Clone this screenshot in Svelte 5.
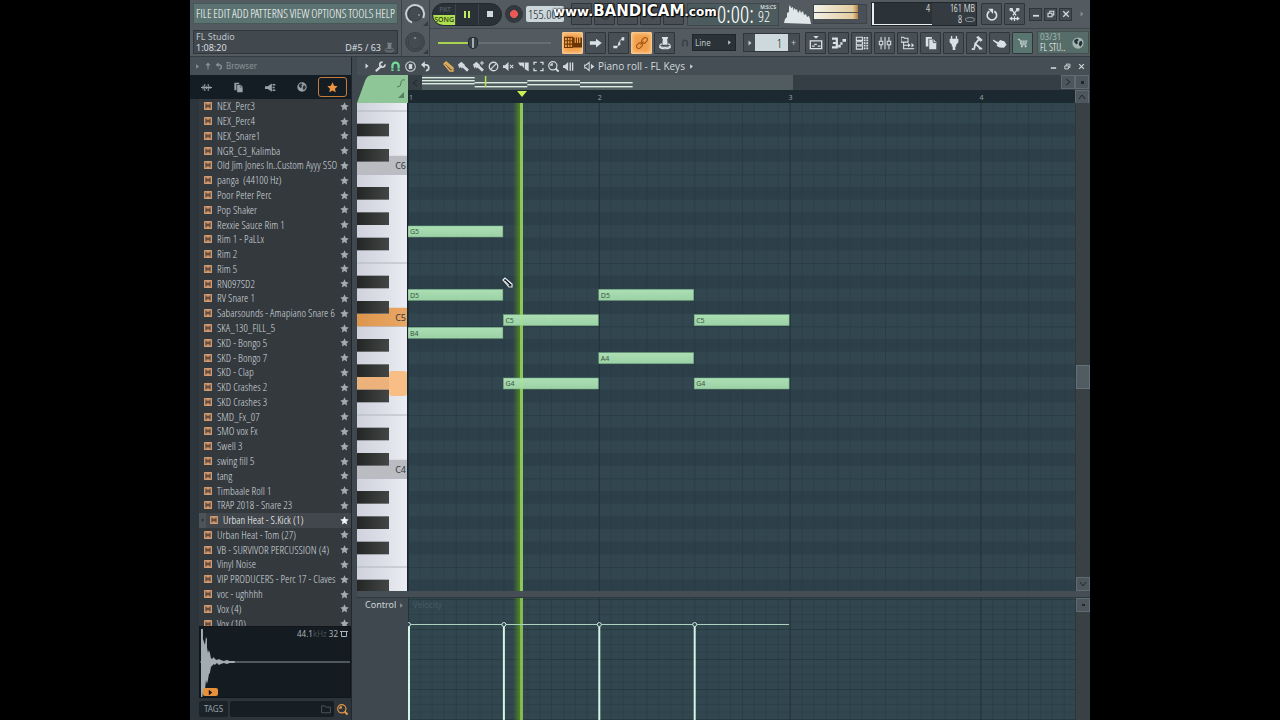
<script>
  const menus = ['FILE', 'EDIT', 'ADD', 'PATTERNS', 'VIEW', 'OPTIONS', 'TOOLS', 'HELP'];

  const samples = [
    'NEX_Perc3', 'NEX_Perc4', 'NEX_Snare1', 'NGR_C3_Kalimba', 'Old Jim Jones In..Custom Ayyy SSO',
    'panga  (44100 Hz)', 'Poor Peter Perc', 'Pop Shaker', 'Rexxie Sauce Rim 1', 'Rim 1 - PaLLx',
    'Rim 2', 'Rim 5', 'RN097SD2', 'RV Snare 1', 'Sabarsounds - Amapiano Snare 6', 'SKA_130_FILL_5',
    'SKD - Bongo 5', 'SKD - Bongo 7', 'SKD - Clap', 'SKD Crashes 2', 'SKD Crashes 3', 'SMD_Fx_07',
    'SMO vox Fx', 'Swell 3', 'swing fill 5', 'tang', 'Timbaale Roll 1', 'TRAP 2018 - Snare 23',
    'Urban Heat - S.Kick (1)', 'Urban Heat - Tom (27)', 'VB - SURVIVOR PERCUSSION (4)', 'Vinyl Noise',
    'VIP PRODUCERS - Perc 17 - Claves', 'voc - ughhhh', 'Vox (4)', 'Vox (10)'
  ];
  let selected = $state('Urban Heat - S.Kick (1)');

  // Piano roll geometry: semitones are counted from C5, beats from bar 1.
  const semitone = 38 / 3;
  const c5 = 217;
  const bar = 190.8;
  const rowTop = (s) => c5 - semitone * (s + 0.5);
  const blackSet = [1, 3, 6, 8, 10];
  const pitchClass = (s) => ((s % 12) + 12) % 12;
  const rows = Array.from({ length: 41 }, (_, i) => 18 - i);
  const blacks = rows.filter((s) => blackSet.includes(pitchClass(s)));
  const seams = rows.filter((s) => [0, 5].includes(pitchClass(s)));
  const octaves = [{ s: 12, name: 'C6' }, { s: 0, name: 'C5' }, { s: -12, name: 'C4' }];
  const steps = Array.from({ length: 57 }, (_, i) => i);
  const notes = [
    { s: 7, t: 0, name: 'G5' }, { s: 2, t: 0, name: 'D5' }, { s: -1, t: 0, name: 'B4' },
    { s: 0, t: 1, name: 'C5' }, { s: -5, t: 1, name: 'G4' },
    { s: 2, t: 2, name: 'D5' }, { s: -3, t: 2, name: 'A4' },
    { s: 0, t: 3, name: 'C5' }, { s: -5, t: 3, name: 'G4' }
  ];
  const mini = [[0, 2], [0, 5], [0, 8], [1, 7], [1, 11], [2, 5], [2, 9], [3, 7], [3, 11]];

  const modes = [
    { id: 'keys', label: 'Typing keyboard', on: true },
    { id: 'arrow', label: 'Step edit' },
    { id: 'slide', label: 'Slide' },
    { id: 'link', label: 'Link', on: true },
    { id: 'stamp', label: 'Stamp' }
  ];
  const windows = [
    { id: 'playlist', label: 'Playlist' }, { id: 'roll', label: 'Piano roll' }, { id: 'rack', label: 'Channel rack' },
    { id: 'mixer', label: 'Mixer' }, { id: 'tree', label: 'Browser' }, { id: 'pages', label: 'Project' },
    { id: 'plug', label: 'Plugins' }, { id: 'tempo', label: 'Tempo tapper' }, { id: 'touch', label: 'Touch' },
    { id: 'cart', label: 'Shop' }
  ];
  const rollTools = ['wrench', 'magnet', 'target', 'undo', 'gap', 'pencil', 'brush', 'brushplus', 'erase', 'mute', 'slice', 'select', 'zoom', 'playback'];
</script>

{#snippet icon(id, size = 16)}
  <svg class="icon" viewBox="0 0 16 16" width={size} height={size} fill="none" stroke="currentColor" stroke-width="1.5" aria-hidden="true">
    {#if id === 'keys'}
      <path d="M.5 3h7v9h-7zM.5 6h7M.5 9h7M3 3v9M5.300 3v9" stroke-width=".9" />
      <path d="M8 3h1.500v5h1V3h1v5h1V3h1v5h1V3H16v9H8z" fill="currentColor" stroke="none" />
    {:else if id === 'arrow'}
      <path d="M1 6h7V3l6.500 5L8 13v-3H1z" fill="currentColor" stroke="none" />
    {:else if id === 'slide'}
      <path d="M4 12.500c6 0 3-8 7.500-9" stroke-width="1" /><path d="M1.500 11h4.500v3H1.500zM7 7.500h2.500v3H7zM11 1.500h3v3.500h-3z" fill="currentColor" stroke="none" />
    {:else if id === 'link'}
      <g transform="rotate(-45 8 8)"><rect x="-1" y="5.200" width="8.500" height="5.600" rx="2.800" /><rect x="8.500" y="5.200" width="8.500" height="5.600" rx="2.800" /><path d="M5 8h6" /></g>
    {:else if id === 'stamp'}
      <path d="M4.500 1h7v1.500l-1 1L11 10H5l.5-6.500-1-1z" fill="currentColor" stroke="none" /><path d="M4.500 9C.5 10 1 13 8 13s7.500-3 3.500-4M1.500 12c1 3.500 12 3.500 13 0" stroke-width="1.200" />
    {:else if id === 'playlist'}
      <path d="M1.500 5.500h13v9h-13z" /><path d="M5 0h6L8 3z" fill="currentColor" stroke="none" /><path d="M3.500 11.500h3M6 9.500h3M10 11.500h3" />
    {:else if id === 'roll'}
      <path d="M0 3h5.500v10H0M1 8h4" stroke-width="2.500" /><path d="M7 13h3v-3H7zM9.500 10H12V7H9.500zM12 6.500h4v-3h-4z" fill="currentColor" stroke="none" />
    {:else if id === 'rack'}
      <path d="M1.500 1.500h7v3.500h-7zM1.500 6.500h7V10h-7zM1.500 11.500h7V15h-7z" stroke-width="1.200" /><path d="M11 1v14M14 1v14" stroke-width="2" stroke-dasharray="2 1" />
    {:else if id === 'mixer'}
      <path d="M3.500 1v14M8 1v14M12.500 1v14" stroke-width="1.200" /><path d="M1.500 6h4v4h-4zM10.500 6h4v4h-4z" fill="#4b5358" stroke-width="1.200" />
    {:else if id === 'tree'}
      <path d="M0 1.500h3l1 1h4V7H0zM3 7v7.500h5M3 10.500h5" stroke-width="1.200" /><path d="M8 8l3 2.500L8 13zM12 8l3 2.500-3 2.500z" fill="currentColor" stroke="none" /><path d="M8 14.500h7" stroke-width="1.200" />
    {:else if id === 'pages'}
      <path d="M2 1h7v2H5v9H2z" fill="currentColor" stroke="none" /><path d="M6 4h5l3 3v8H6z" fill="currentColor" stroke="none" /><path d="M10.500 4v3.500H14" stroke="#4b5358" stroke-width="1" />
    {:else if id === 'plug'}
      <path d="M4.500 0H6v3h4V0h1.500v3H13v4l-2.500 3v2H9.500v4h-3v-4h-1v-2L3 7V3h1.500z" fill="currentColor" stroke="none" />
    {:else if id === 'tempo'}
      <path d="M2 15h3.500M10 14.500h4M5 14l1-5 6 5M6 9l4-5" stroke-width="2" /><path d="M7 1.500l2.500-1.500 5 4.500-2.500 2z" fill="currentColor" stroke="none" />
    {:else if id === 'touch'}
      <path d="M0 4l6 3 2-2.500 5 1.500 2.500 4-3 3.500-5-.5-3.500-2 1-1.500L0 5.500z" fill="currentColor" stroke="none" />
    {:else if id === 'cart'}
      <path d="M1 3h2.500l2 7.500h7" stroke-width="1.200" /><path d="M4.500 4.500H14l-1 4.500H5.500z" fill="currentColor" stroke="none" /><path d="M7 4v5M9.500 4v5M12 4v5M4 6.700h10" stroke="#58756f" stroke-width=".7" /><circle cx="6.500" cy="12.500" r="1.200" fill="currentColor" stroke="none" /><circle cx="11.500" cy="12.500" r="1.200" fill="currentColor" stroke="none" />
    {:else if id === 'wrench'}
      <path d="M2 14l7-6.500" stroke-width="3" stroke-linecap="round" /><path d="M14.500 5A3.800 3.800 0 1 1 11 1.500" stroke-width="2.500" />
    {:else if id === 'magnet'}
      <path d="M3.500 14.500V7a4.500 4.500 0 0 1 9 0v7.500" stroke-width="3.200" /><path d="M1.500 11.500h5M9.500 11.500h5" stroke="#3d474d" stroke-width="1" />
    {:else if id === 'target'}
      <circle cx="8" cy="8" r="7" stroke-width="1.500" /><path d="M5.500 4.500h5v7h-5z" fill="currentColor" stroke="none" />
    {:else if id === 'undo'}
      <path d="M4 5.500h4.500a3.800 3.800 0 0 1 0 8.500" stroke-width="2.500" /><path d="M1.500 5.500L7 .5v10z" fill="currentColor" stroke="none" />
    {:else if id === 'pencil'}
      <path d="M1.500 4.500l3-3 10 8.500v4.500H10zM3 3l10 9" stroke-width="2" />
    {:else if id === 'brush' || id === 'brushplus'}
      <path d="M0 5l5-4 5.500 5L6 10.500 5 9v3L3.500 8.500 2 11z" fill="currentColor" stroke="none" /><path d="M8 8l6.500 6" stroke-width="4" />
      {#if id === 'brushplus'}<path d="M13 0v6M10 3h6" />{/if}
    {:else if id === 'erase'}
      <circle cx="8" cy="8" r="6.200" stroke-width="1.900" /><path d="M3.500 12.500l9-9" stroke-width="1.900" />
    {:else if id === 'mute'}
      <path d="M0 6h3L8 1.500v13L3 10H0z" fill="currentColor" stroke="none" /><path d="M10 5.500l5 5M15 5.500l-5 5" />
    {:else if id === 'slice'}
      <path d="M0 2h9v9L6 7H3z" fill="currentColor" stroke="none" /><path d="M10 2h5.500v13L10 12z" fill="currentColor" stroke="none" />
    {:else if id === 'select'}
      <path d="M1.500 5.500V2H5.500M10.500 2h4v3.500M14.500 10.500V14h-4M5.500 14h-4v-3.500" stroke-width="2" />
    {:else if id === 'zoom'}
      <circle cx="7" cy="7" r="6" stroke-width="1.800" /><path d="M7 7H3a4 4 0 0 1 4-4z" fill="currentColor" stroke="none" /><path d="M11 11l4.500 4.500" stroke-width="3" />
    {:else if id === 'playback'}
      <path d="M0 6h2.500L7.500 1.500v13L2.500 10H0z" fill="currentColor" stroke="none" /><path d="M10.500 2v12M14 2v12" stroke-width="2" />
    {:else if id === 'speaker'}
      <path d="M1 6h2L7.500 2v12L3 10H1z" stroke-width="1.500" /><path d="M10 4l5 4-5 4z" fill="currentColor" stroke="none" />
    {:else if id === 'wave'}
      <path d="M0 8h16M3 5v6M5.500 3v10M8 6v4M10.500 3v10M13 6v4" />
    {:else if id === 'horn'}
      <path d="M0 6h4l6-4v12l-6-4H0z" fill="currentColor" stroke="none" /><path d="M11 4h4M11 8h3M11 12h4" stroke-width="2" />
    {:else if id === 'globe'}
      <circle cx="8" cy="8" r="7.500" fill="currentColor" stroke="none" /><path d="M3 4l4-2 2 2-2 2 1 2-2 2-3-3zM10 6l3-1 1 4-3 4-2-3z" fill="#26323a" stroke="none" />
    {:else if id === 'star'}
      <path d="M8 .5l2.300 5 5.200.6-3.900 3.600 1.100 5.300L8 12.400 3.300 15l1.100-5.300L.5 6.100l5.200-.6z" fill="currentColor" stroke="none" />
    {:else if id === 'right'}
      <path d="M5 3l6 5-6 5z" fill="currentColor" stroke="none" />
    {:else if id === 'up'}
      <path d="M8 15V4" stroke-width="2" /><path d="M3 7l5-6 5 6z" fill="currentColor" stroke="none" />
    {:else if id === 'refresh'}
      <path d="M11.500 4a5.800 5.800 0 1 1-6 0" stroke-width="2" /><path d="M4 1h6v6.500z" fill="currentColor" stroke="none" />
    {:else if id === 'cut'}
      <path d="M4 1l6 8M12 1L6 9" stroke-width="1.600" /><circle cx="4" cy="2" r="1.500" /><circle cx="12" cy="2" r="1.500" /><path d="M2 13h12M5 11l-2 2 2 2M11 11l2 2-2 2M8 10v6" />
    {:else if id === 'min'}
      <path d="M2 11.500h12" stroke-width="3.500" />
    {:else if id === 'restore'}
      <path d="M2 6.500h8v7H2zM5.500 6V2.500h8v7.500H11" stroke-width="2.200" />
    {:else if id === 'close'}
      <path d="M2.500 2.500l11 11M13.500 2.500l-11 11" stroke-width="2.600" />
    {:else if id === 'folder'}
      <path d="M1 3h5l1.500 2H15v9H1z" stroke-width="1.200" />
    {:else if id === 'sample'}
      <rect width="16" height="16" rx="1" fill="#d09a72" stroke="none" /><path d="M4 3v10M12 3v10M4 8h8" stroke="#3b2d26" stroke-width="2" /><path d="M8 4.500v7" stroke="#3b2d26" stroke-width="1.500" />
    {/if}
  </svg>
{/snippet}

{#snippet knob(bright)}
  <svg width="26" height="26" viewBox="0 0 26 26" aria-hidden="true">
    <circle cx="12" cy="13" r="9" fill="none" stroke={bright ? '#c6d0d5' : '#3c454b'} stroke-width="2" stroke-dasharray={bright ? '43 14' : 'none'} transform="rotate(110 12 13)" />
    <circle cx="12" cy="13" r="7" fill="#434c53" stroke="#343d43" />
    <circle cx={bright ? 16 : 12} cy={bright ? 14 : 9} r="1" fill="#89959b" />
    <path d="M25 20v5h-5z" fill="#343c41" />
  </svg>
{/snippet}

<div class="app">
  <header>
    <div class="left">
      <nav aria-label="Main menu">
        {#each menus as m}<button>{m}</button>{/each}
      </nav>
      <div class="hint">
        <div class="line">FL Studio</div>
        <div class="line bright"><span>1:08:20</span><span class="note">D#5 / 63 {@render icon('stamp', 11)}</span></div>
      </div>
    </div>
    <div class="knobs">
      <div>{@render knob(true)}</div>
      <div>{@render knob(false)}</div>
    </div>
    <div class="bars">
      <div class="bar one">
        <div class="transport">
          <button class="mode" aria-label="Pattern or song mode"><span>PAT</span><b>SONG</b></button>
          <button aria-label="Pause"><svg width="6" height="7"><path d="M0 0h2v7H0zM4 0h2v7H4z" fill="#c1ea5e" /></svg></button>
          <button aria-label="Stop"><svg width="6" height="6"><path d="M0 0h6v6H0z" fill="#d2d9dc" /></svg></button>
        </div>
        <button class="rec" aria-label="Record"></button>
        <input class="bpm" aria-label="Tempo" value="155.000" />
        <div class="ghosts">
          <button class="sq dim" aria-label="Metronome">{@render icon('up', 12)}</button>
          <button class="sq dim" aria-label="Wait">{@render icon('refresh', 12)}</button>
          <button class="sq dim" aria-label="Countdown">{@render icon('wave', 12)}</button>
          <button class="sq dim" aria-label="Overdub">{@render icon('undo', 12)}</button>
          <button class="sq dim" aria-label="Loop record">{@render icon('arrow', 12)}</button>
        </div>
        <output class="clock"><span class="big">0:00:</span><span class="cs"><i>M:S:CS</i><small>92</small></span></output>
        <svg class="scope" width="28" height="19" aria-label="Spectrum"><path d="M0 18l1-4 2-2V8l2-1V2l1-2 1 3 2-1v4l1-3 2 2 1-1 1 4 2-3 1 3 2-2 1 4 2-1 1 3 2-1 1 3 1 5z" fill="#dfe7e9" /></svg>
        <div class="meters"><span></span><span></span></div>
        <div class="cpu"><span class="graph">4</span><span class="mem"><span>161 MB</span><span class="poly">8 <em></em></span></span></div>
        <button class="sq" aria-label="Restart">{@render icon('refresh', 13)}</button>
        <button class="sq" aria-label="Cut">{@render icon('cut', 13)}</button>
        <div class="win">
          <button aria-label="Minimize">{@render icon('min', 8)}</button>
          <button aria-label="Restore">{@render icon('restore', 8)}</button>
          <button aria-label="Close">{@render icon('close', 8)}</button>
        </div>
        <span class="more">{@render icon('right', 8)}</span>
      </div>
      <div class="bar two">
        <input class="vol" type="range" min="0" max="100" value="29" aria-label="Master volume" />
        <div class="set">
          {#each modes as m}<button class="sq {m.id}" class:on={m.on} aria-label={m.label}>{@render icon(m.id, m.id === 'keys' ? 18 : m.id === 'arrow' ? 14 : m.id === 'link' ? 12 : 14)}</button>{/each}
        </div>
        <span class="snapicon">{@render icon('magnet', 8)}</span>
        <div class="snap">
          <select aria-label="Snap"><option>Line</option></select>
          {@render icon('right', 7)}
        </div>
        <div class="pattern">
          <button aria-label="Pattern menu">{@render icon('right', 8)}</button>
          <input aria-label="Pattern number" value="1" />
          <button aria-label="Add pattern">+</button>
        </div>
        <div class="set">
          {#each windows as w}<button class="sq" class:shop={w.id === 'cart'} aria-label={w.label}>{@render icon(w.id, w.id === 'cart' ? 12 : 14)}</button>{/each}
        </div>
        <div class="news"><span>03/31<br /><b>FL STU..</b></span>{@render icon('globe', 12)}</div>
      </div>
    </div>
    <div class="watermark"><span>www.</span><b>BANDICAM</b><small>.com</small></div>
  </header>

  <main>
    <aside>
      <div class="crumbs">{@render icon('right', 7)}{@render icon('up', 8)}{@render icon('undo', 8)}<span>Browser</span></div>
      <div class="tabs">
        <button aria-label="Sounds">{@render icon('wave', 11)}</button>
        <button aria-label="Files">{@render icon('pages', 11)}</button>
        <button aria-label="Plugins">{@render icon('horn', 11)}</button>
        <button aria-label="Online">{@render icon('globe', 10)}</button>
        <button class="active" aria-label="Starred">{@render icon('star', 11)}</button>
      </div>
      <div class="list">
        <ul>
          {#each samples as name}
            <li>
              <button class:sel={name === selected} onclick={() => (selected = name)}>
                {#if name === selected}<span class="open">{@render icon('right', 6)}</span>{/if}
                {@render icon('sample', 8)}<span class="name">{name}</span><span class="fav">{@render icon('star', 9)}</span>
              </button>
            </li>
          {/each}
        </ul>
      </div>
      <div class="preview">
        <div class="rate">44.1<span>kHz</span> 32 <svg width="8" height="8" fill="none" stroke="#aab4b8"><path d="M1.500 1.500h5v5h-5zM0 1.500h8" /></svg></div>
        <svg class="wave" viewBox="0 0 151 70" preserveAspectRatio="none" width="100%" height="70" aria-label="Waveform">
          <path d="M0 35h151" stroke="#8b979d" />
          <path d="M1 2h2v10l2 6 1-8 1 2v8l1 6 1-3 1 3 1 5 1 1 2-2 1 2 2 1 2-1 2 1 3 1 3-1 3 1 5 0v2l-5 0-3 1-3-1-3 1-2 1-2-2-2 2-1-1-2 2-1 1-1 6-1 1-1 6-1 4-1-4-1 10-1 6-1-4-1 8H1z" fill="#a3acb1" />
        </svg>
        <button class="play" aria-label="Play preview">{@render icon('right', 9)}</button>
      </div>
      <div class="tags">
        <button>TAGS</button>
        <label><input aria-label="Search" />{@render icon('folder', 10)}</label>
        <span class="find">{@render icon('zoom', 11)}</span>
      </div>
    </aside>

    <section class="piano">
      <div class="title">
        {@render icon('right', 8)}
        <div class="tools">
          {#each rollTools as t}
            {#if t === 'gap'}<span class="gap"></span>{:else}<button class={t} aria-label={t}>{@render icon(t, 11)}</button>{/if}
          {/each}
        </div>
        <h1>{@render icon('speaker', 11)}<span>Piano roll - FL Keys</span>{@render icon('right', 7)}</h1>
        <div class="wbtns">
          <button aria-label="Minimize roll">{@render icon('min', 7)}</button>
          <button aria-label="Restore roll">{@render icon('restore', 7)}</button>
          <button aria-label="Close roll">{@render icon('close', 7)}</button>
        </div>
      </div>

      <div class="sheet">
        <svg class="corner" width="51" height="28" aria-hidden="true">
          <path d="M0 28L8 6q2-6 7-6h36v28z" fill="#8ec697" />
          <path d="M40 12q4 0 4-4t4-3" fill="none" stroke="#547a60" /><path d="M47 17v6h-6z" fill="#577e62" />
        </svg>
        <div class="overview">
          <button aria-label="Scroll left"><svg width="6" height="8"><path d="M5 1L1 4l4 3" fill="none" stroke="#1e272d" /></svg></button>
          <div class="track">
            <svg class="thumb" viewBox="0 0 373 15" preserveAspectRatio="none">
              {#each mini as [c, y]}<rect x={c * 53} {y} width="53" height="1.400" fill="#d9eee0" />{/each}
              <path d="M64 1v11" stroke="#b7e64c" stroke-width="1.500" />
            </svg>
          </div>
          <button class="raised" aria-label="Scroll right"><svg width="6" height="8"><path d="M1 1l4 3-4 3" fill="none" stroke="#1e272d" /></svg></button>
        </div>
        <button class="raised dot" aria-label="View options"><svg width="3" height="3"><rect width="3" height="3" fill="#1e272d" /></svg></button>
        <svg class="ruler" width="100%" height="13">
          {#each [0, 1, 2, 3] as b}<text x={b * bar + (b ? -1 : 1)} y="10">{b + 1}</text>{/each}
          <path d="M109 1h10l-5 6z" fill="#c9f158" />
        </svg>
        <button class="raised" aria-label="Scroll up"><svg width="8" height="6"><path d="M1 5l3-4 3 4" fill="none" stroke="#1e272d" /></svg></button>

        <svg class="keys" width="100%" height="100%" aria-label="Piano keys">
          <defs>
            <linearGradient id="ivory"><stop offset="0" stop-color="#cfd2dc" /><stop offset=".6" stop-color="#dfe1e9" /><stop offset="1" stop-color="#ecedf4" /></linearGradient>
            <linearGradient id="ebony"><stop offset="0" stop-color="#242626" /><stop offset="1" stop-color="#444646" /></linearGradient>
            <linearGradient id="amber"><stop offset="0" stop-color="#dd954b" /><stop offset="1" stop-color="#eaa866" /></linearGradient>
          </defs>
          <rect width="50" height="100%" fill="url(#ivory)" />
          {#each seams as s}<path d="M0 {rowTop(s - 1)}h50" stroke="#b2b6bf" />{/each}
          {#each octaves as o}
            <path d="M0 {rowTop(o.s)}h32v-6h18v{semitone + 6}H0z" fill={o.s === 0 ? 'url(#amber)' : '#bbbcc2'} />
            <text class="oct" x="49" y={c5 - o.s * semitone + 1} text-anchor="end">{o.name}</text>
          {/each}
          <rect x="0" y={rowTop(-5)} width="34" height={semitone} fill="#edb27b" />
          <rect x="32" y={rowTop(-5) - 6} width="18" height="25" rx="3" fill="#f8be86" />
          {#each blacks as s}<rect x="0" y={rowTop(s)} width="32" height={semitone} fill="url(#ebony)" />{/each}
          <path d="M50.500 0v600" stroke="#16232a" />
        </svg>

        <svg class="grid" width="100%" height="100%" aria-label="Notes">
          <defs>
            <linearGradient id="glow"><stop offset="0" stop-color="#558f22" stop-opacity="0" /><stop offset="1" stop-color="#528c1e" /></linearGradient>
            <linearGradient id="mint" x2="0" y2="1"><stop offset="0" stop-color="#acdfb4" /><stop offset="1" stop-color="#9cd1a5" /></linearGradient>
          </defs>
          <rect width="100%" height="100%" fill="#31464f" />
          {#each blacks as s}<rect y={rowTop(s)} width="100%" height={semitone} fill="#2d404a" />{/each}
          {#each seams as s}<rect y={rowTop(s) + semitone} width="100%" height="1" fill="#2b3e47" />{/each}
          {#each steps as i}<rect x={(i * bar) / 16} width="1" height="100%" fill="#20323a" opacity={i % 16 === 0 ? 0.95 : i % 4 === 0 ? 0.4 : 0.16} />{/each}
          <rect x="105" width="8" height="100%" fill="url(#glow)" />
          <rect x="112" width="3" height="100%" fill="#7fb34c" />
          {#each notes as n}
            <rect x={(n.t * bar) / 2} y={rowTop(n.s) + 1} width={bar / 2 - 0.5} height="11" fill="url(#mint)" stroke="#72a77f" stroke-width=".5" />
            <text class="pitch" x={(n.t * bar) / 2 + 2} y={c5 - n.s * semitone + 3}>{n.name}</text>
          {/each}
          <rect x="112" width="3" height="100%" fill="#a8ed77" opacity=".35" />
          <g transform="translate(94 174)"><path d="M1 3l2-2 7 6v3H7z" fill="#1d282e" stroke="#e4eaec" stroke-width="1.200" /><path d="M3 4l4 4M5 3l4 4" stroke="#e4eaec" stroke-width=".8" /></g>
        </svg>
        <div class="vscroll">
          <span class="grip"></span>
          <button class="raised" aria-label="Scroll down"><svg width="8" height="6"><path d="M1 1l3 4 3-4" fill="none" stroke="#1e272d" /></svg></button>
        </div>

        <div class="split"></div>

        <div class="control">Control {@render icon('right', 7)}</div>
        <svg class="grid low" width="100%" height="122" aria-label="Velocity">
          <rect width="100%" height="100%" fill="#31464f" />
          {#each steps as i}<rect x={(i * bar) / 16} width="1" height="100%" fill="#20323a" opacity={i % 16 === 0 ? 0.9 : i % 4 === 0 ? 0.4 : 0.2} />{/each}
          {#each Array.from({ length: 17 }, (_, i) => i) as i}<rect y={1 + i * 7.500} width="100%" height="1" fill="#22343c" opacity={i % 4 === 0 ? 0.7 : 0.3} />{/each}
          <text class="faint" x="5" y="10">Velocity</text>
          <rect x="105" width="8" height="100%" fill="url(#glow)" /><rect x="112" width="3" height="100%" fill="#84b94e" />
          <path d="M0 26.500h381" stroke="#a8d2bd" />
          {#each [0, 1, 2, 3] as t}
            <rect x={(t * bar) / 2 - (t ? 0.5 : 0)} y="28" width="2" height="100%" fill="#d3f5e4" />
            <circle cx={(t * bar) / 2 + 0.5} cy="26.500" r="2" fill="#31464f" stroke="#c2e8d4" />
          {/each}
        </svg>
        <div class="vscroll end"><button class="raised" aria-label="Control options"><svg width="3" height="2"><rect width="3" height="2" fill="#1e272d" /></svg></button></div>
      </div>
    </section>
  </main>
</div>

<style>
  :global(body) { background: #000; overflow: hidden; }
  .app, .app * { box-sizing: border-box; }
  .app {
    --narrow: 'Open Sans Condensed Light', 'Noto Sans ExtraCondensed', 'Liberation Sans Narrow', 'Open Sans Condensed', 'Noto Sans', sans-serif;
    position: relative; display: flex; flex-direction: column;
    width: 100%; max-width: 900px; height: 100vh; margin: 0 auto;
    background: #3f484e; color: #c3ccd1; font: 9px/12px 'Noto Sans', sans-serif; overflow: hidden;
  }
  button, input, select { font: inherit; color: inherit; border: 0; padding: 0; margin: 0; background: none; min-width: 0; }
  button { display: inline-flex; align-items: center; justify-content: center; }
  svg { display: block; flex: none; }

  header { position: relative; display: flex; height: 57px; background: #535b60; border-bottom: 1px solid #343c42; flex: none; }
  .left { width: 212px; padding: 3px 3px 2px; display: flex; flex-direction: column; gap: 6px; border-right: 1px solid #3b4348; }
  nav { height: 22px; display: flex; align-items: center; justify-content: space-between; padding: 0 2px; background: #5c7471; border: 1px solid #465956; color: #fff; font: 12px/14px var(--narrow); }
  .hint { flex: 1; background: #42494e; border: 1px solid #30373c; padding: 0 2px; display: flex; flex-direction: column; justify-content: center; line-height: 11px; color: #bbc4c8; }
  .line { display: flex; justify-content: space-between; font-size: 9px; }
  .bright { color: #d8dfe2; }
  .note { display: flex; align-items: center; gap: 3px; }
  .note :global(svg) { color: #768086; }
  .knobs { width: 28px; display: flex; flex-direction: column; border-right: 1px solid #3b4348; }
  .knobs div { flex: 1; display: grid; place-items: center; }
  .bars { flex: 1; min-width: 0; display: flex; flex-direction: column; }
  .bar { height: 29px; display: flex; align-items: center; }
  .bar.two { height: 27px; }
  .one { border-bottom: 1px solid #40484d; padding: 0 4px 0 2px; }

  .transport { width: 70px; height: 23px; display: flex; border-radius: 12px; overflow: hidden; background: #2a3238; border: 1px solid #22292e; flex: none; }
  .transport button { flex: 1; border-right: 1px solid #3c454b; }
  .transport button:last-child { border-right: 0; }
  .transport .mode { flex-direction: column; justify-content: flex-start; align-items: stretch; line-height: 11px; font-size: 7px; color: #5c666c; text-align: right; }
  .mode span { padding-right: 4px; }
  .mode b { background: #b0df52; color: #26380f; font-weight: 500; padding-right: 1px; line-height: 10px; }
  .rec { width: 18px; height: 18px; margin: 0 3px; border-radius: 9px; flex: none; background: radial-gradient(circle, #ec5853 32%, #33393e 38%); border: 1px solid #30373c; }
  .bpm { width: 38px; height: 16px; background: #ccd7db; color: #0b1114; border-radius: 2px; padding: 0 2px; font: 13px/16px var(--narrow); }
  .ghosts { display: flex; gap: 2px; margin-left: 7px; }
  .sq { width: 21px; height: 22px; flex: none; border: 1px solid #2e363b; background: #485056; color: #dbe2e5; border-radius: 1px; }
  .dim { color: #343c42; }
  .on { background: #f2a04c; color: #6a3505; border-color: #f8c58d; box-shadow: inset 0 0 4px #ffd9a2; }
  .link.on { color: #a65a18; }
  .clock { width: 92px; height: 23px; margin-left: 3px; padding-right: 8px; background: #4c5b5d; border: 1px solid #3d484b; display: flex; justify-content: flex-end; color: #fff; font: 23px/21px var(--narrow); }
  .cs { position: relative; width: 16px; padding-top: 5px; text-align: right; }
  .cs small { display: block; font-size: 15px; line-height: 15px; }
  .cs i { position: absolute; right: -6px; top: 0; font: 5px/6px 'Noto Sans', sans-serif; }
  .scope { margin-left: 5px; }
  .meters { width: 54px; height: 20px; margin: 0 4px 0 1px; display: flex; flex-direction: column; gap: 1px; padding: 0 8px 4px 0; border: 1px solid #3c4449; background: #4a5055; }
  .meters span { flex: 1; background: linear-gradient(90deg, #f3f1e6, #e3cda0 88%, #b57e3f); }
  .cpu { width: 106px; height: 24px; margin-right: 4px; display: flex; background: #2b3338; border: 1px solid #20272b; color: #fff; font: 10px/11px var(--narrow); text-align: right; flex: none; }
  .graph { width: 60px; padding-right: 2px; border-left: 2px solid #e9eef0; border-bottom: 1px solid #e9eef0; }
  .mem { flex: 1; display: flex; flex-direction: column; padding-right: 1px; background: #343c41; }
  .poly { display: flex; justify-content: flex-end; align-items: center; gap: 3px; }
  .mem em { width: 10px; height: 5px; border: 1px solid #838d92; border-radius: 50%; }
  .one > .sq + .sq { margin-left: 2px; }
  .win { display: flex; gap: 2px; margin-left: 4px; }
  .win button { width: 13px; height: 13px; border: 1px solid #2e363b; background: #444c51; color: #d6dde0; }
  .more { margin-left: auto; color: #828b90; }

  .two { padding: 0 1px 0 8px; }
  .vol { appearance: none; width: 113px; height: 12px; background: linear-gradient(90deg, #a9d34e 30%, #666f74 30%) center / 100% 2px no-repeat; }
  .vol::-webkit-slider-thumb { appearance: none; width: 10px; height: 12px; border-radius: 4px 4px 6px 6px; border: 1px solid #20282c; background: linear-gradient(90deg, #39424a 40%, #a2acb1 40% 60%, #39424a 60%); }
  .set { display: flex; gap: 2px; margin-left: 11px; }
  .snapicon { margin: 0 3px 0 6px; color: #3a4348; }
  .snap { width: 44px; height: 17px; display: flex; align-items: center; background: #2b3238; border: 1px solid #20272c; color: #bac4c9; padding-right: 2px; }
  .snap select { appearance: none; flex: 1; padding-left: 2px; outline: 0; font-size: 8px; }
  .pattern { width: 57px; height: 19px; display: flex; margin-left: 7px; border: 1px solid #30383d; background: #464e54; }
  .pattern button { width: 11px; }
  .pattern input { flex: 1; background: #ced9de; color: #0e171b; font: 13px/16px var(--narrow); text-align: right; padding-right: 6px; }
  .pattern + .set { margin-left: 5px; }
  .shop { background: #58756f; }
  .news { flex: 1; height: 23px; margin-left: 4px; display: flex; align-items: center; justify-content: space-between; padding: 0 4px 0 2px; background: #556c68; border: 1px solid #43524f; font-size: 8px; line-height: 10px; color: #a3b6b2; white-space: nowrap; }
  .news b { font: 10px/10px var(--narrow); color: #fff; }
  .watermark { position: absolute; left: 363px; top: 3px; display: flex; align-items: baseline; color: #fff; font: bold 13px/17px 'DejaVu Sans', sans-serif; text-shadow: 0 0 2px #000, 0 0 2px #000, 1px 1px 1px #000; }
  .watermark b { font-size: 15px; }
  .watermark small { font-size: 12px; }

  main { flex: 1; min-height: 0; display: flex; }
  aside { width: 162px; display: flex; flex-direction: column; background: #2c353b; border-right: 1px solid #20282d; flex: none; }
  .crumbs { height: 18px; display: flex; align-items: center; gap: 3px; padding-left: 4px; background: #464f55; color: #8b959b; font-size: 8px; }
  .tabs { height: 24px; display: flex; align-items: center; background: #141d24; color: #97a2a8; }
  .tabs button { flex: 1; height: 20px; }
  .tabs .active { flex: none; width: 29px; margin-right: 4px; color: #ef9440; border: 1px solid #c87c3c; border-radius: 3px; }
  .list { flex: 1; min-height: 0; overflow: hidden; margin-left: 9px; background: #34393e; }
  ul { list-style: none; margin: 0; padding: 0; height: 532px; display: grid; grid-template: repeat(36, 1fr) / minmax(0, 1fr); }
  li { min-height: 0; display: flex; }
  li button { flex: 1; gap: 5px; justify-content: flex-start; padding: 0 2px 0 5px; color: #d3dade; font: 11px/14px var(--narrow); text-align: left; }
  .name { flex: 1; min-width: 0; white-space: pre; }
  .open { width: 7px; display: grid; place-items: center; align-self: stretch; background: #4c5359; color: #2a3136; margin-right: -1px; }
  li .sel { background: #41474c; color: #fff; padding-left: 0; }
  .fav { margin-left: -4px; color: #a2a9af; }
  .sel .fav { color: #eef2f4; }
  .preview { position: relative; height: 72px; margin-left: 9px; background: #141b21; border: 1px solid #10161a; }
  .rate { position: absolute; right: 2px; top: 1px; display: flex; gap: 2px; align-items: center; font-size: 8px; color: #aab4b8; }
  .rate span { color: #465057; margin-left: -2px; }
  .play { position: absolute; left: 3px; bottom: 1px; width: 15px; height: 8px; border-radius: 2px; background: #e7903a; color: #1b1306; }
  .tags { height: 22px; display: flex; align-items: center; gap: 2px; padding: 0 3px 0 9px; }
  .tags button { width: 29px; height: 16px; background: #1b2329; border-radius: 2px; color: #96a1a7; font-size: 8px; }
  .tags label { flex: 1; min-width: 0; height: 16px; display: flex; align-items: center; background: #161e24; border-radius: 2px; padding-right: 3px; color: #59646a; }
  .tags input { flex: 1; width: 20px; outline: 0; }
  .find { color: #e39445; margin-left: 1px; }

  .piano { flex: 1; min-width: 0; margin-left: 5px; display: flex; flex-direction: column; }
  .title { height: 18px; display: flex; align-items: center; padding: 0 5px 0 6px; background: #454e54; color: #d1d9dc; }
  .tools { display: flex; gap: 4px; margin-left: 4px; align-items: center; }
  .tools .gap { width: 4px; }
  .magnet { color: #6fe09b; }
  .pencil { color: #eab05b; }
  h1 { display: flex; gap: 3px; align-items: center; margin: 0 0 0 10px; font: 400 10px/14px 'Open Sans', sans-serif; white-space: nowrap; }
  .wbtns { margin-left: auto; display: flex; gap: 7px; }
  .sheet { flex: 1; min-height: 0; display: grid; grid-template-columns: 51px 1fr 15px; grid-template-rows: 15px 13px 1fr 7px 122px; background: #3f484e; }
  .corner { grid-row: 1 / span 2; }
  .overview { display: flex; background: #343e44; min-width: 0; }
  .overview button { width: 14px; }
  .track { flex: 1; min-width: 0; display: flex; }
  .thumb { width: 58%; height: 15px; background: #515c61; }
  .raised { height: 14px; width: 14px; background: #4c565c; border: 1px solid #606b71; color: #1e272d; }
  .ruler { background: #1c2931; }
  .ruler text { font: 7px 'Noto Sans', sans-serif; fill: #93a0a6; }
  .keys, .grid { min-height: 0; overflow: hidden; }
  .oct { font: 9px 'Noto Sans', sans-serif; fill: #33383d; }
  .pitch { font: 7px 'Noto Sans', sans-serif; fill: #385743; }
  .faint { font: 8px 'Noto Sans', sans-serif; fill: #465b64; }
  .vscroll { display: flex; flex-direction: column; background: #394145; border-left: 1px solid #2c363b; min-height: 0; }
  .vscroll .raised { width: 14px; margin-top: auto; }
  .grip { height: 24px; margin-top: 262px; background: #515c62; border: 1px solid #647076; }
  .vscroll.end .raised { margin: 0; }
  .split { grid-column: 1 / -1; background: #454e54; border-bottom: 1px solid #2d373c; }
  .control { display: flex; gap: 2px; padding: 0 0 0 8px; height: 14px; align-items: center; font-size: 9px; color: #cdd5d9; }
  .control :global(svg) { color: #899399; }
</style>
